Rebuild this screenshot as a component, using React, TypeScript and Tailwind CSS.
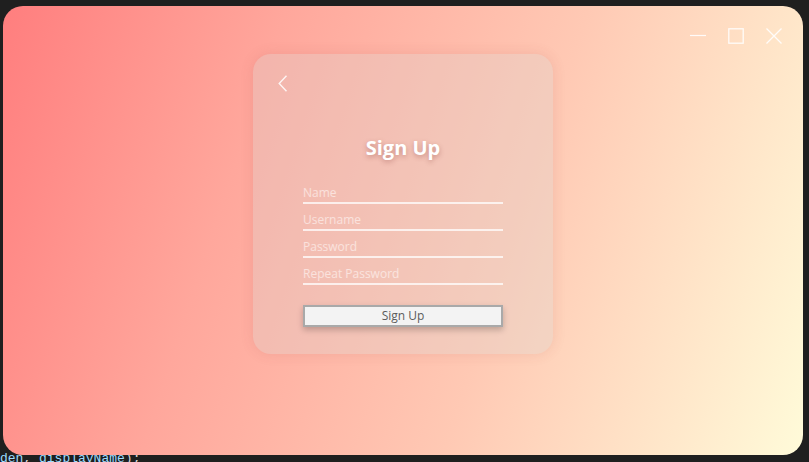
const fields = ["Name", "Username", "Password", "Repeat Password"];

function TitleBar() {
  return (
    <div className="flex justify-end gap-[22px] pt-[22px] pr-[21px] h-[38px]">
      <svg width="16" height="16" viewBox="0 0 16 16" className="text-white/90">
        <path d="M0 7.5h16" stroke="currentColor" strokeWidth="1.2" />
      </svg>
      <svg width="16" height="16" viewBox="0 0 16 16" className="text-white/90">
        <rect x="0.8" y="0.8" width="14.4" height="14.4" fill="none" stroke="currentColor" strokeWidth="1.3" />
      </svg>
      <svg width="16" height="16" viewBox="0 0 16 16" className="text-white/90">
        <path d="M0.5 0.5l15 15M15.5 0.5l-15 15" stroke="currentColor" strokeWidth="1.3" />
      </svg>
    </div>
  );
}

function SignUpCard() {
  return (
    <div className="mx-auto mt-[10px] w-[300px] h-[300px] rounded-[18px] bg-[#d6d8d4]/30 shadow-[0_0_14px_rgba(150,60,60,0.12)] flex flex-col">
      <div className="pl-[25px] mt-[21px] h-[17px]">
        <svg width="10" height="17" viewBox="0 0 10 17">
          <path d="M8.5 0.8L1.2 8.5l7.3 7.7" fill="none" stroke="rgba(255,255,255,0.85)" strokeWidth="1.4" />
        </svg>
      </div>

      <h1 className="mt-[42px] h-[28px] text-center text-[20px] leading-[28px] font-bold text-white [text-shadow:0_2px_5px_rgba(120,40,40,0.35)]">
        Sign Up
      </h1>

      <div className="mx-[50px] mt-[23px] flex flex-col gap-[8px]">
        {fields.map((f) => (
          <div key={f} className="flex flex-col pb-[1px] border-b-2 border-white/75">
            <span className="text-[12px] leading-[16px] text-white/55">{f}</span>
          </div>
        ))}
      </div>

      <button className="mx-[50px] mt-[20px] h-[22px] bg-[#f3f3f3] border-2 border-[#a9a9a9] text-[12px] leading-[18px] text-[#5c5c5c] shadow-[0_3px_6px_rgba(0,0,0,0.22)]">
        Sign Up
      </button>
    </div>
  );
}

export default function App() {
  return (
    <div className="relative w-[809px] h-[462px] overflow-hidden bg-[#1f1f1f] font-['Open_Sans',sans-serif]">
      <div className="absolute left-0 bottom-[-5px] font-['Liberation_Mono',monospace] text-[13px] leading-[16px] whitespace-pre">
        <span className="text-[#9cdcfe]">den</span>
        <span className="text-[#d4d4d4]">, </span>
        <span className="text-[#9cdcfe]">displayName</span>
        <span className="text-[#d4d4d4]">);</span>
      </div>

      <div className="relative ml-[3px] mt-[6px] w-[800px] h-[449px] rounded-[20px] bg-[linear-gradient(108deg,#ff7e7e_0%,#ffa79c_30%,#ffc9b4_62%,#fffbd9_100%)] flex flex-col">
        <TitleBar />
        <SignUpCard />
      </div>
    </div>
  );
}
